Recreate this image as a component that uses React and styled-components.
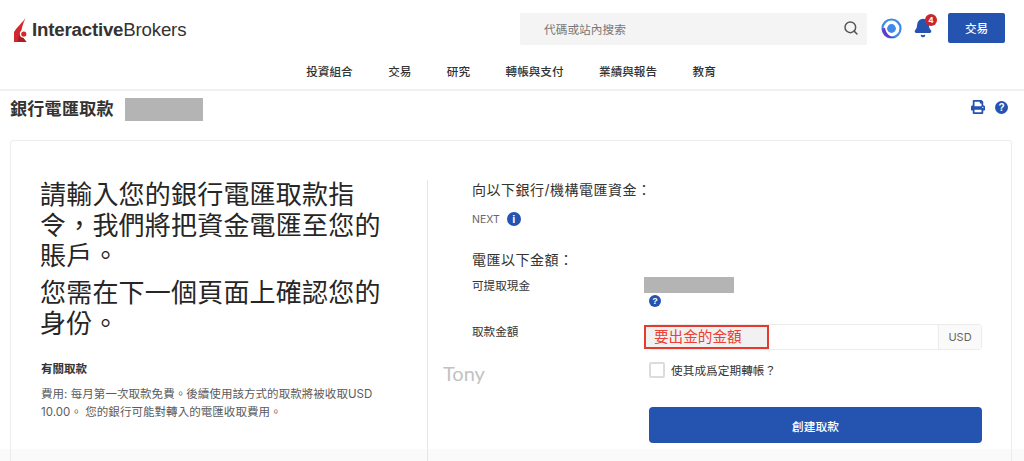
import styled, { createGlobalStyle } from "styled-components";
import { Search, Bell } from "lucide-react";
import { FaPrint } from "react-icons/fa";

const GlobalStyle = createGlobalStyle`
  html, body {
    margin: 0;
    height: 461px;
    overflow: hidden;
    background: #fff;
  }
  body {
    font-family: "Inter", "Noto Sans CJK TC", sans-serif;
    color: #2b2b2b;
  }
`;

const Page = styled.div`
  position: relative;
  width: 1024px;
  height: 461px;
  overflow: hidden;
  background: linear-gradient(#fff 449px, #fafafa 449px);
`;
const Header = styled.header`
  height: 89px;
  border-bottom: 2px solid #f0f0f0;
`;
const TopRow = styled.div`
  display: flex;
  align-items: center;
  height: 58px;
  padding: 0 19px 0 14px;
`;
const Logo = styled.div`
  display: flex;
  align-items: center;
  gap: 5px;
  margin-right: auto;
  padding-top: 2px;
`;
const LogoText = styled.span`
  font-family: "Liberation Sans", sans-serif;
  font-size: 18.7px;
  letter-spacing: -0.2px;
  color: #333;
  > b {
    font-weight: 700;
  }
`;
const SearchBox = styled.div`
  display: flex;
  align-items: center;
  justify-content: space-between;
  box-sizing: border-box;
  width: 347px;
  height: 32px;
  padding: 0 8px 2px 24px;
  margin-right: 14px;
  background: #f4f4f4;
  border-radius: 2px;
  font-size: 11.7px;
  color: #777;
`;
const BellWrap = styled.div`
  position: relative;
  display: flex;
  margin: 0 15px 2px 11px;
`;
const Badge = styled.span`
  position: absolute;
  top: -4px;
  right: -4px;
  width: 12px;
  height: 12px;
  border-radius: 50%;
  background: #c9252c;
  color: #fff;
  font-size: 8px;
  font-weight: 700;
  line-height: 12px;
  text-align: center;
`;
const TradeButton = styled.button`
  width: 57px;
  height: 30px;
  margin-bottom: 2px;
  border: none;
  border-radius: 2px;
  background: #2553b0;
  color: #fff;
  font: 500 11.6px "Inter", "Noto Sans CJK TC", sans-serif;
`;
const Nav = styled.nav`
  display: flex;
  justify-content: center;
  gap: 35.5px;
  height: 31px;
  padding-right: 2px;
  font-size: 11.6px;
  font-weight: 500;
  line-height: 28px;
  color: #333;
`;
const TitleRow = styled.div`
  display: flex;
  align-items: center;
  box-sizing: border-box;
  height: 34px;
  padding: 3px 16px 0 10px;
`;
const Title = styled.h1`
  margin: 0 11px 5px 0;
  font-size: 17px;
  font-weight: 700;
  letter-spacing: 0.3px;
  color: #333;
`;
const Mask = styled.div`
  width: ${(p) => p.$w}px;
  height: ${(p) => p.$h}px;
  background: #b4b4b4;
`;
const TitleIcons = styled.div`
  display: flex;
  align-items: center;
  gap: 10px;
  margin: 0 0 5px auto;
  color: #2553b0;
`;
const Card = styled.section`
  display: flex;
  box-sizing: border-box;
  width: 1002px;
  height: 400px;
  margin: 15px 0 0 10px;
  border: 1px solid #ececec;
  border-radius: 3px;
`;
const LeftCol = styled.div`
  box-sizing: border-box;
  width: 417px;
  height: 281px;
  margin-top: 39px;
  padding-left: 30px;
  border-right: 1px solid #e6e6e6;
`;
const Lead = styled.p`
  width: 350px;
  margin: 0 0 6.5px -1px;
  font-size: 26px;
  line-height: 30.5px;
  letter-spacing: 0.2px;
  color: #262626;
`;
const InfoTitle = styled.h3`
  margin: 23px 0 9px;
  font-size: 11.5px;
  font-weight: 700;
  line-height: 14px;
  color: #333;
`;
const InfoText = styled.p`
  width: 345px;
  margin: 0;
  font-size: 11.5px;
  line-height: 18px;
  letter-spacing: 0.05px;
  color: #5c5c5c;
`;
const RightCol = styled.div`
  box-sizing: border-box;
  width: 554px;
  padding: 39px 0 0 44px;
`;
const Heading = styled.h2`
  margin: 0;
  font-size: 14px;
  font-weight: 400;
  line-height: 20px;
  letter-spacing: 0.5px;
  color: #333;
`;
const BankRow = styled.div`
  display: flex;
  align-items: center;
  gap: 7px;
  margin: 12px 0 24px;
  font-size: 10.5px;
  color: #666;
`;
const FormRow = styled.div`
  display: grid;
  grid-template-columns: 177px 333px;
  align-items: start;
  margin-top: ${(p) => p.$top || 0}px;
  font-size: 11.6px;
  color: #333;
`;
const Label = styled.div`
  line-height: 16px;
  padding-top: ${(p) => p.$top || 0}px;
`;
const HelpDot = styled.span`
  display: flex;
  align-items: center;
  justify-content: center;
  width: ${(p) => p.$size}px;
  height: ${(p) => p.$size}px;
  border-radius: 50%;
  background: #2553b0;
  color: #fff;
  font-size: ${(p) => p.$size - 3}px;
  font-weight: 800;
  font-family: "Liberation Sans", sans-serif;
`;
const Cash = styled.div`
  display: flex;
  flex-direction: column;
  gap: 2px;
  margin: 7px 0 0 -5px;
  > span {
    margin-left: 5px;
  }
`;
const AmountField = styled.div`
  position: relative;
  display: flex;
  box-sizing: border-box;
  height: 26px;
  border: 1px solid #ececec;
  border-radius: 3px;
`;
const AmountInput = styled.div`
  flex: 1;
`;
const Currency = styled.div`
  width: 42px;
  border-left: 1px solid #ececec;
  background: #fafafa;
  font-size: 11px;
  line-height: 25px;
  text-align: center;
  color: #666;
`;
const RedBox = styled.div`
  position: absolute;
  top: 0;
  left: -6px;
  box-sizing: border-box;
  width: 125px;
  height: 24px;
  padding-left: 8px;
  border: 2px solid #e63a2e;
  background: #f1f1f1;
  color: #ec4034;
  font-size: 14.6px;
  line-height: 20px;
`;
const CheckRow = styled.label`
  display: flex;
  align-items: center;
  gap: 6px;
  margin-top: 12px;
  font-size: 11.6px;
  letter-spacing: 0.1px;
  color: #333;
`;
const Checkbox = styled.span`
  box-sizing: border-box;
  width: 16px;
  height: 16px;
  border: 2px solid #dcdcdc;
  border-radius: 2px;
`;
const SubmitButton = styled.button`
  width: 333px;
  height: 36px;
  margin-top: 29px;
  border: none;
  border-radius: 4px;
  background: #2553b0;
  color: #fff;
  font: 500 11.7px "Inter", "Noto Sans CJK TC", sans-serif;
`;
const Watermark = styled.div`
  position: absolute;
  left: 443px;
  top: 361px;
  font-family: "Lato", sans-serif;
  font-size: 20px;
  color: #c2c2c2;
`;

const IbLogo = () => (
  <svg width="13" height="25" viewBox="0 0 13 25">
    <path d="M11.5 0 C9 4 3 9 0 14 L0 24 L12.5 24 L7 17 C7 11 9 6 11.5 0Z" fill="#d1272d" />
    <path d="M3.5 24 L5 17 L7 17 L12.5 24Z" fill="#a81e24" />
    <circle cx="9.5" cy="16" r="3.7" fill="#fff" />
    <circle cx="9.8" cy="16" r="2.6" fill="#d1272d" />
  </svg>
);

const AssistantIcon = () => (
  <svg width="21" height="21" viewBox="0 0 21 21" style={{ marginBottom: 2 }}>
    <circle cx="10.5" cy="10.5" r="9" fill="#fff" stroke="#3f8ae6" strokeWidth="2.2" />
    <path d="M1.2 10.5 A9.3 9.3 0 0 0 14 19.4 C8 19 5 15 4 10 Z" fill="#6b35c9" />
    <circle cx="10.5" cy="10.5" r="4.4" fill="#3f8ae6" />
  </svg>
);

const navItems = ["投資組合", "交易", "研究", "轉帳與支付", "業績與報告", "教育"];

export default function App() {
  return (
    <Page>
      <GlobalStyle />
      <Header>
        <TopRow>
          <Logo>
            <IbLogo />
            <LogoText>
              <b>Interactive</b>Brokers
            </LogoText>
          </Logo>
          <SearchBox>
            代碼或站內搜索
            <Search size={16} color="#555" strokeWidth={2.2} />
          </SearchBox>
          <AssistantIcon />
          <BellWrap>
            <Bell size={20} color="#2553b0" fill="#2553b0" />
            <Badge>4</Badge>
          </BellWrap>
          <TradeButton>交易</TradeButton>
        </TopRow>
        <Nav>
          {navItems.map((item) => (
            <span key={item}>{item}</span>
          ))}
        </Nav>
      </Header>
      <TitleRow>
        <Title>銀行電匯取款</Title>
        <Mask $w={78} $h={23} />
        <TitleIcons>
          <FaPrint size={14} />
          <HelpDot $size={13}>?</HelpDot>
        </TitleIcons>
      </TitleRow>
      <Card>
        <LeftCol>
          <Lead>請輸入您的銀行電匯取款指令，我們將把資金電匯至您的賬戶。</Lead>
          <Lead>您需在下一個頁面上確認您的身份。</Lead>
          <InfoTitle>有關取款</InfoTitle>
          <InfoText>
            費用: 每月第一次取款免費。後續使用該方式的取款將被收取USD 10.00。 您的銀行可能對轉入的電匯收取費用。
          </InfoText>
        </LeftCol>
        <RightCol>
          <Heading>向以下銀行/機構電匯資金：</Heading>
          <BankRow>
            NEXT
            <HelpDot $size={14}>i</HelpDot>
          </BankRow>
          <Heading>電匯以下金額：</Heading>
          <FormRow>
            <Label $top={8}>可提取現金</Label>
            <Cash>
              <Mask $w={90} $h={16} />
              <HelpDot $size={12}>?</HelpDot>
            </Cash>
          </FormRow>
          <FormRow $top={17}>
            <Label>取款金額</Label>
            <div>
              <AmountField>
                <AmountInput />
                <Currency>USD</Currency>
                <RedBox>要出金的金額</RedBox>
              </AmountField>
              <CheckRow>
                <Checkbox />
                使其成爲定期轉帳？
              </CheckRow>
              <SubmitButton>創建取款</SubmitButton>
            </div>
          </FormRow>
        </RightCol>
      </Card>
      <Watermark>Tony</Watermark>
    </Page>
  );
}
